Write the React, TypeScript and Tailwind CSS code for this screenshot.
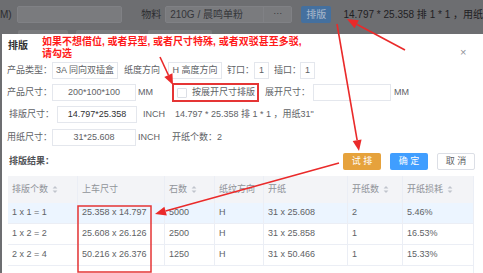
import React from "react";

const Sort = () => (
  <svg width="6" height="9" viewBox="0 0 6 9" className="inline-block ml-[4px]">
    <path d="M0.6 3.6 L3 1 L5.4 3.6Z" fill="#c0c4cc" />
    <path d="M0.6 5.4 L3 8 L5.4 5.4Z" fill="#c0c4cc" />
  </svg>
);

function Arrow({ x1, y1, x2, y2 }: { x1: number; y1: number; x2: number; y2: number }) {
  const dx = x2 - x1;
  const dy = y2 - y1;
  const len = Math.sqrt(dx * dx + dy * dy);
  const ux = dx / len;
  const uy = dy / len;
  const hl = 11;
  const hw = 4.5;
  const bx = x2 - ux * hl;
  const by = y2 - uy * hl;
  const px = -uy;
  const py = ux;
  const pts = `${x2},${y2} ${bx + px * hw},${by + py * hw} ${bx - px * hw},${by - py * hw}`;
  return (
    <g>
      <line x1={x1} y1={y1} x2={bx} y2={by} stroke="#ea2a2a" strokeWidth="1.6" />
      <polygon points={pts} fill="#ea2a2a" />
    </g>
  );
}

const rows = [
  ["1 x 1 = 1", "25.358 x 14.797", "5000", "H", "31 x 25.608", "2", "5.46%"],
  ["1 x 2 = 2", "25.608 x 26.126", "2500", "H", "31 x 25.858", "1", "16.53%"],
  ["2 x 2 = 4", "50.216 x 26.376", "1250", "H", "31 x 50.466", "1", "15.33%"],
];

export default function App() {
  return (
    <div className="relative w-[483px] h-[273px] overflow-hidden bg-[#6d6e71] text-[9px] font-[family-name:'Liberation_Sans','Noto_Sans_CJK_SC',sans-serif]">
      {/* background page (dimmed) */}
      <div className="flex items-center h-[27px] pt-[1px] text-[#2c2d30] whitespace-nowrap">
        <span className="w-[19px] text-[10px]">M)</span>
        <div className="w-[114px] h-[17px] rounded-[2px] bg-[#7a7b7e] border border-[#808185]" />
        <span className="ml-[19px] w-[26px] text-[10px]">物料</span>
        <div className="flex h-[17px] rounded-[2px] bg-[#7a7b7e] border border-[#808185]">
          <div className="w-[97px] pl-[4px] flex items-center text-[10px] text-[#35363a]">210G / 晨鸣单粉</div>
          <div className="w-[28px] border-l border-[#808185] flex items-center justify-center text-[#35363a]">···</div>
        </div>
        <div className="ml-[9px] w-[33px] h-[17px] rounded-[2px] bg-[#44709f] flex items-center justify-center text-[10px] text-[#aab9cc]">排版</div>
        <span className="ml-[12px] text-[10px] text-[#1f2023]">14.797 * 25.358 排 1 * 1 ，用纸</span>
      </div>
      <div className="flex mt-[3px] gap-[8px] pl-[18px]">
        <div className="w-[50px] h-[10px] rounded-[2px] bg-[#7a7b7e]" />
        <div className="w-[64px] h-[10px] rounded-[2px] bg-[#7a7b7e]" />
        <div className="w-[64px] h-[10px] rounded-[2px] bg-[#7a7b7e]" />
      </div>

      {/* dialog */}
      <div className="absolute left-[2px] top-[34px] right-0 bottom-0 bg-white text-[#606266] whitespace-nowrap">
        <div className="h-[28px] pl-[6px] pt-[5px]">
          <span className="text-[10px] leading-[13px] font-semibold text-[#303133]">排版</span>
        </div>
        <div className="absolute left-[40px] top-[2px] text-[10px] leading-[12px] font-bold text-[#ff1a1a]">
          如果不想借位, 或者异型, 或者尺寸特殊, 或者双驳甚至多驳,
          <br />
          请勾选
        </div>
        <div className="absolute left-[458px] top-[13px] text-[11px] leading-[11px] text-[#909399]">×</div>

        <div className="pl-[5px]">
          {/* row 1 */}
          <div className="flex items-center h-[17px]">
            <span className="w-[45px]">产品类型：</span>
            <div className="w-[66px] h-[17px] border border-[#e4e7ed] flex items-center justify-center">3A 同向双插盒</div>
            <span className="w-[50px] pl-[6px]">纸度方向</span>
            <div className="w-[54px] h-[17px] border border-[#e4e7ed] flex items-center justify-center">H 高度方向</div>
            <span className="w-[32px] pl-[5px]">钉口：</span>
            <div className="w-[15px] h-[17px] border border-[#e4e7ed] flex items-center justify-center">1</div>
            <span className="w-[31px] pl-[5px]">插口：</span>
            <div className="w-[15px] h-[17px] border border-[#e4e7ed] flex items-center justify-center">1</div>
          </div>
          {/* row 2 */}
          <div className="flex items-center h-[17px] mt-[5px]">
            <span className="w-[45px]">产品尺寸：</span>
            <div className="w-[84px] h-[17px] border border-[#e4e7ed] flex items-center justify-center">200*100*100</div>
            <span className="w-[36px] pl-[2px]">MM</span>
            <div className="w-[87px] h-[19px] border-2 border-[#e53535] flex items-center pl-[3px]">
              <div className="w-[10px] h-[10px] border border-[#dcdfe6] rounded-[1px]" />
              <span className="ml-[5px]">按展开尺寸排版</span>
            </div>
            <span className="w-[54px] pl-[6px]">展开尺寸：</span>
            <div className="w-[78px] h-[17px] border border-[#e4e7ed]" />
            <span className="pl-[3px]">MM</span>
          </div>
          {/* row 3 */}
          <div className="flex items-center h-[17px] mt-[5px]">
            <span className="w-[50px] pl-[2px]">排版尺寸：</span>
            <div className="w-[80px] h-[17px] border border-[#e4e7ed] flex items-center justify-center text-[#303133]">14.797*25.358</div>
            <span className="w-[38px] pl-[6px]">INCH</span>
            <span>14.797 * 25.358 排 1 * 1 ，用纸31"</span>
          </div>
          {/* row 4 */}
          <div className="flex items-center h-[17px] mt-[6px]">
            <span className="w-[45px]">用纸尺寸：</span>
            <div className="w-[84px] h-[17px] border border-[#e4e7ed] flex items-center justify-center">31*25.608</div>
            <span className="w-[36px] pl-[2px]">INCH</span>
            <span>开纸个数：2</span>
          </div>
          {/* row 5 */}
          <div className="flex items-center h-[17px] mt-[7px]">
            <span className="w-[336px] pl-[2px] font-semibold text-[#505256]">排版结果：</span>
            <div className="w-[38px] h-[17px] rounded-[2px] bg-[#e6a23c] text-white flex items-center justify-center">试 排</div>
            <div className="ml-[9px] w-[38px] h-[17px] rounded-[2px] bg-[#409eff] text-white flex items-center justify-center">确 定</div>
            <div className="ml-[9px] w-[38px] h-[17px] rounded-[2px] border border-[#dcdfe6] text-[#606266] flex items-center justify-center">取 消</div>
          </div>
        </div>

        {/* table */}
        <div className="ml-[6px] mt-[6px] w-[466px] border-r border-[#ebeef5]">
          <div className="grid grid-cols-[70px_87px_50px_49px_84px_55px_71px] h-[27px] bg-[#f3f4f7] text-[#909399]">
            <div className="flex items-center pl-[4px] border-r border-[#ebeef5]">排版个数<Sort /></div>
            <div className="flex items-center pl-[4px] border-r border-[#ebeef5]">上车尺寸</div>
            <div className="flex items-center pl-[4px] border-r border-[#ebeef5]">石数<Sort /></div>
            <div className="flex items-center pl-[4px] border-r border-[#ebeef5]">纸纹方向</div>
            <div className="flex items-center pl-[4px] border-r border-[#ebeef5]">开纸</div>
            <div className="flex items-center pl-[4px] border-r border-[#ebeef5]">开纸数<Sort /></div>
            <div className="flex items-center pl-[4px]">开纸损耗<Sort /></div>
          </div>
          {rows.map((r, i) => (
            <div
              key={i}
              className={`grid grid-cols-[70px_87px_50px_49px_84px_55px_71px] h-[21px] border-b border-[#ebeef5] ${i === 0 ? "bg-[#ecf5ff]" : "bg-white"}`}
            >
              {r.map((c, j) => (
                <div key={j} className={`flex items-center pl-[4px] ${j < 6 ? "border-r border-[#ebeef5]" : ""}`}>
                  {c}
                </div>
              ))}
            </div>
          ))}
          <div className="h-[10px]" />
        </div>
      </div>

      {/* annotations */}
      <svg className="absolute inset-0 pointer-events-none" width="483" height="273" viewBox="0 0 483 273">
        <Arrow x1={405} y1={50} x2={347} y2={19} />
        <Arrow x1={160} y1={57} x2={173} y2={85} />
        <Arrow x1={337} y1={24} x2={359} y2={151} />
        <Arrow x1={339} y1={163} x2={155} y2={214} />
        <rect x="78" y="206" width="73" height="66" fill="none" stroke="#e53535" strokeWidth="1.5" />
      </svg>
    </div>
  );
}
